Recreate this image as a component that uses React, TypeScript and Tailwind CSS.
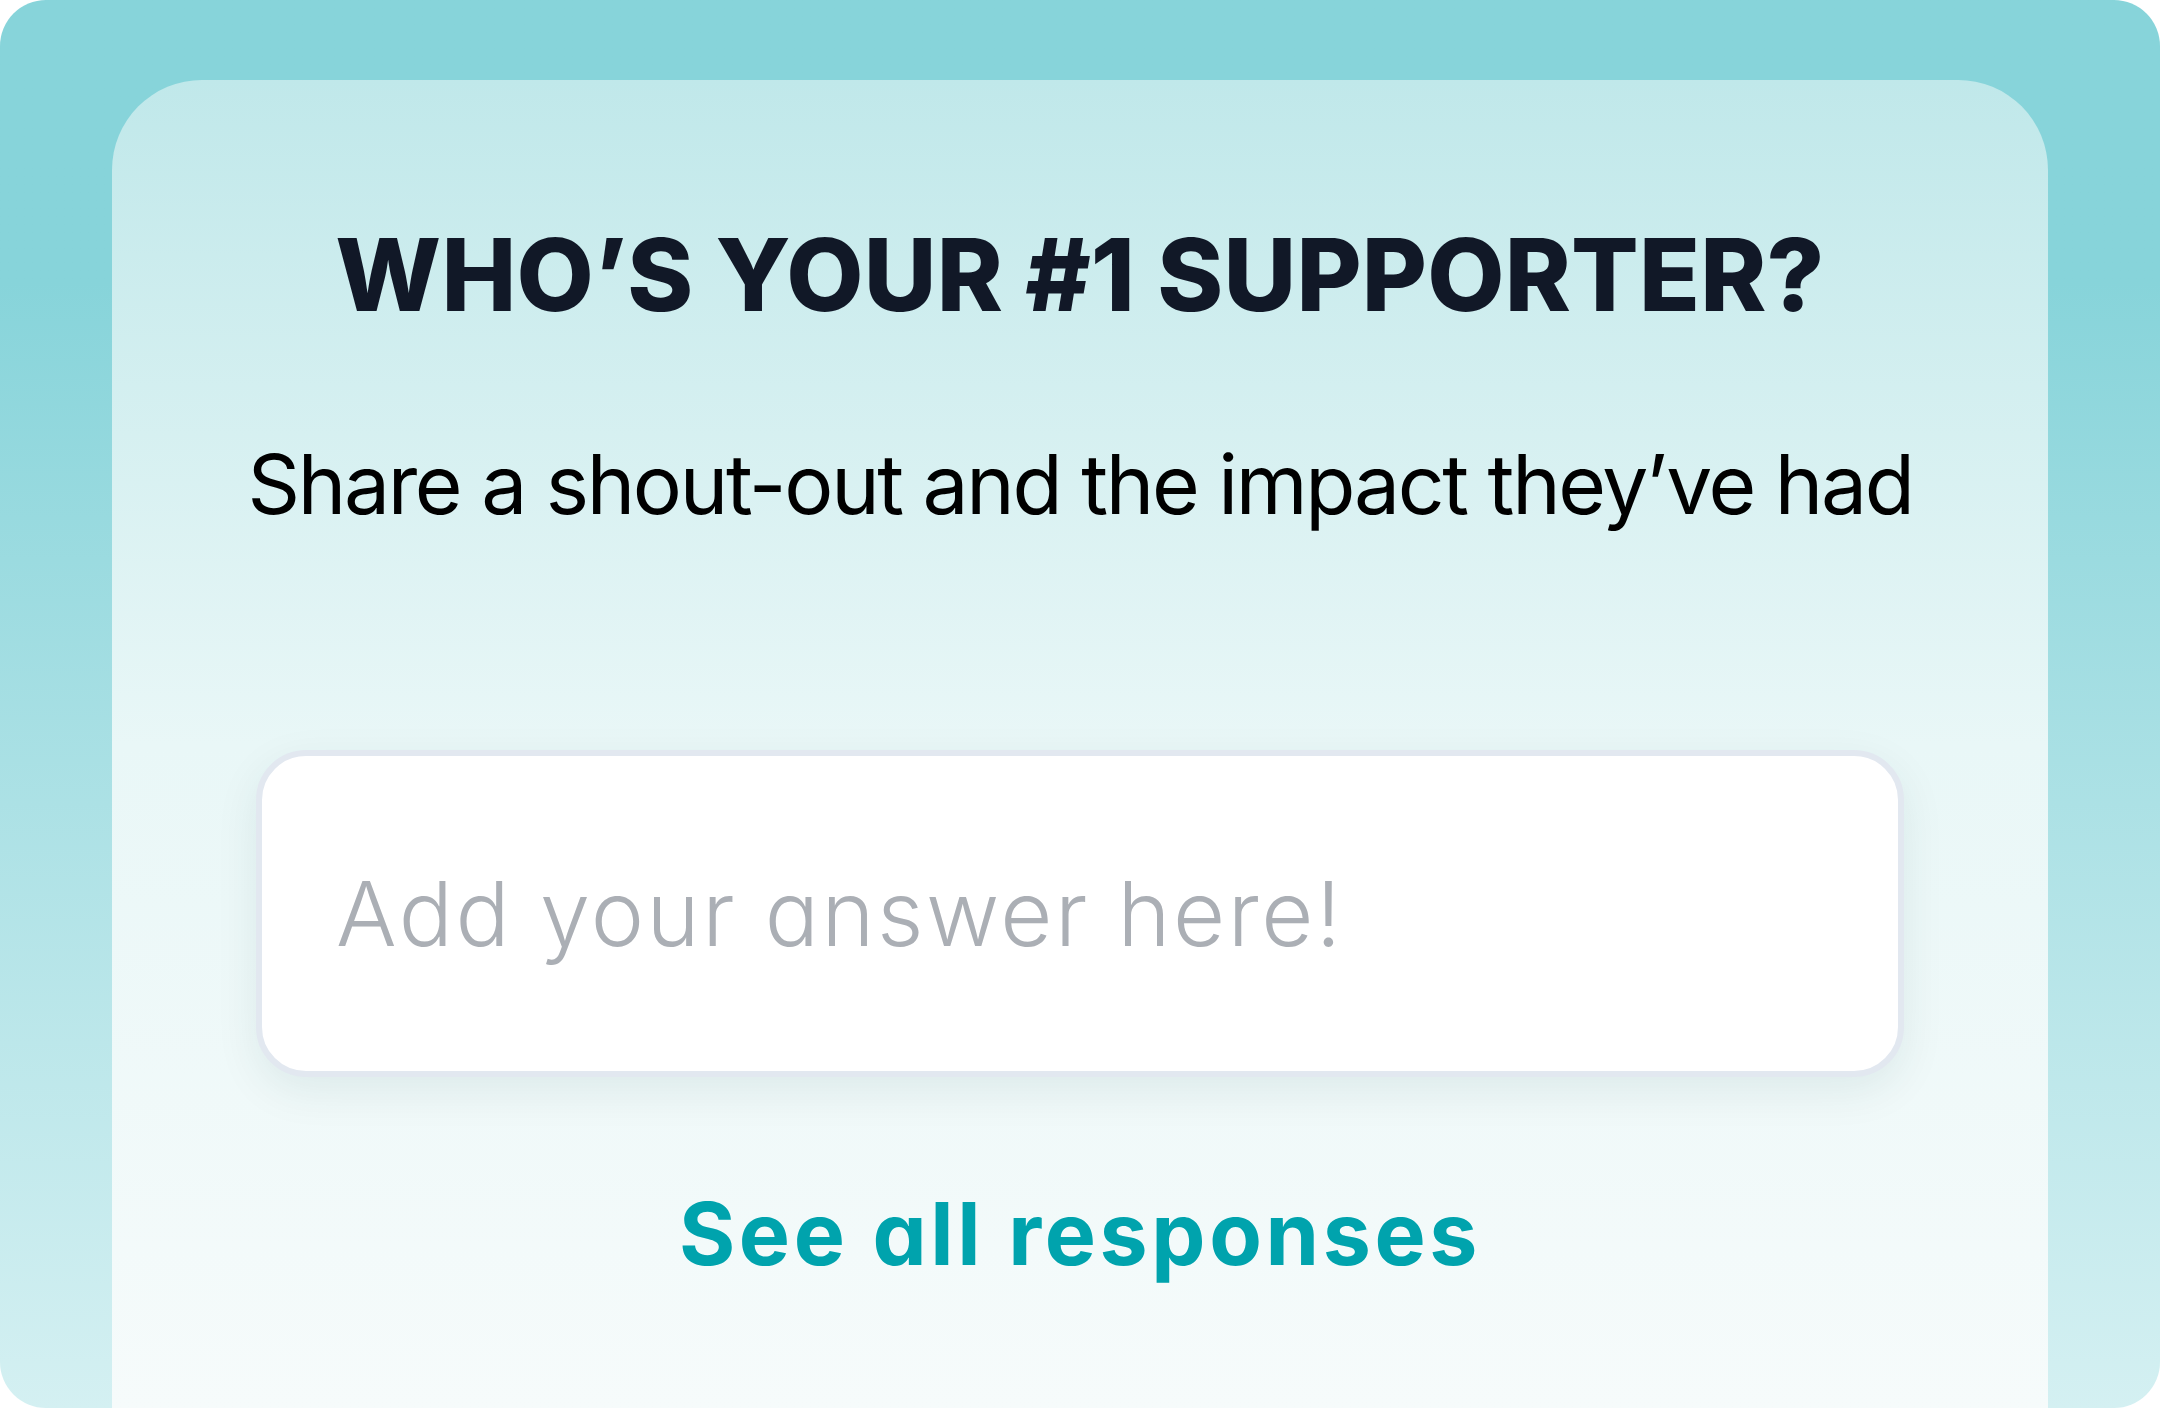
import React from "react";

export default function App() {
  return (
    <div className="w-[2160px] h-[1408px] overflow-hidden rounded-[46px] bg-gradient-to-b from-[#87d4da] from-20% to-[#d4f0f2] px-[112px] pt-[80px]">
      <div className="flex h-full flex-col items-center rounded-t-[90px] bg-gradient-to-b from-[#c0e8ea] via-[#e9f7f7] via-50% to-[#f6fbfb] pt-[145px]">
        <h1 className="font-['Inter','Liberation_Sans',sans-serif] text-[100px] font-extrabold leading-none text-[#111827] tracking-[0.002em]">
          WHO’S YOUR #1 SUPPORTER?
        </h1>
        <p className="mt-[119px] font-['Inter','Liberation_Sans',sans-serif] text-[82px] font-normal leading-none tracking-[-0.028em] text-black">
          Share a shout-out and the impact they’ve had
        </p>
        <div className="mt-[224px] flex h-[327px] w-[1648px] items-center rounded-[50px] border-[6px] border-[#e2e8f0] bg-white pl-[74px] shadow-[0_14px_44px_rgba(15,60,70,0.08)]">
          <span className="font-['Inter','Liberation_Sans',sans-serif] text-[90px] font-light leading-none tracking-[0.028em] text-[#abafb5] [font-feature-settings:'cv11']">
            Add your answer here!
          </span>
        </div>
        <a className="mt-[114px] font-['Inter','Liberation_Sans',sans-serif] text-[86px] font-bold leading-none tracking-[0.042em] text-[#00a3ad] [font-feature-settings:'cv11']">
          See all responses
        </a>
      </div>
    </div>
  );
}
